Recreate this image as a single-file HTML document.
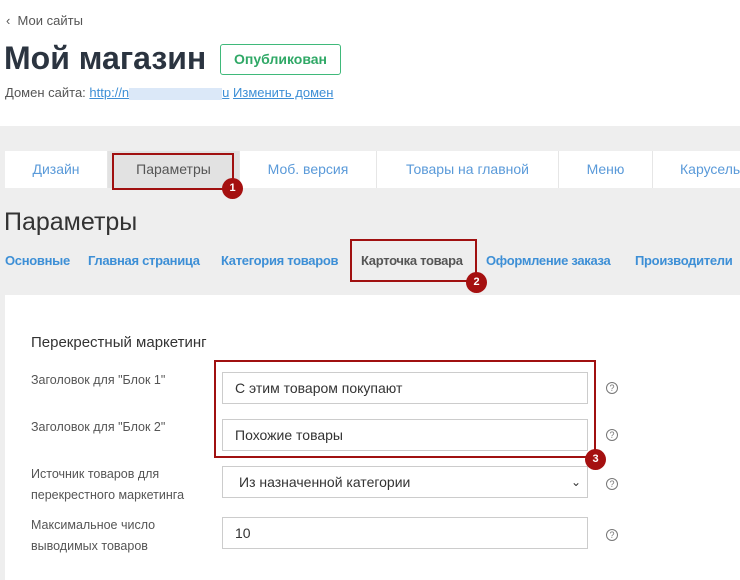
<!DOCTYPE html>
<html><head><meta charset="utf-8"><style>
*{box-sizing:border-box;margin:0;padding:0}
body{width:740px;height:580px;overflow:hidden;background:#fff;font-family:"Liberation Sans",sans-serif;position:relative;color:#333}
.a{position:absolute;white-space:nowrap}
.gray{position:absolute;left:0;top:126px;width:740px;height:454px;background:#eee}
.panel{position:absolute;left:5px;top:295px;width:735px;height:285px;background:#fff}
.tab{position:absolute;top:151px;height:37px;background:#fff;border-right:1px solid #e6e6e6;color:#5a9ad9;font-size:14px;text-align:center;line-height:37px}
.sub{position:absolute;top:253px;font-size:13px;color:#3d8fd6;font-weight:bold;letter-spacing:-.3px}
.red{position:absolute;border:2px solid #a01010}
.badge{position:absolute;width:21px;height:21px;border-radius:50%;background:#a51010;color:#fff;font-size:11px;font-weight:bold;text-align:center;line-height:21px}
.inp{position:absolute;left:222px;width:366px;height:32px;border:1px solid #ccc;font-size:14px;padding-left:12px;line-height:30px;color:#333}
.lbl{position:absolute;left:31px;font-size:12.5px;color:#555;line-height:21px}
.q{position:absolute;left:606px;width:12px;height:12px;border:1px solid #777;border-radius:50%;font-size:9px;line-height:10px;text-align:center;color:#777}
</style></head><body>
<div class="a" style="left:6px;top:13px;font-size:13px;color:#555">&#8249;&nbsp;&nbsp;Мои сайты</div>
<div class="a" style="left:4px;top:40px;font-size:32px;font-weight:bold;color:#2b3440">Мой магазин</div>
<div class="a" style="left:220px;top:44px;width:121px;height:31px;border:1px solid #3fb97a;border-radius:3px;color:#2fa866;font-size:14px;font-weight:bold;text-align:center;line-height:29px">Опубликован</div>
<div class="a" style="left:5px;top:85px;font-size:13px;color:#555">Домен сайта: <span style="color:#3d8fd6;text-decoration:underline">http://n</span><span style="display:inline-block;width:93px;height:12px;background:#dbe8f8;vertical-align:middle"></span><span style="color:#3d8fd6;text-decoration:underline">u</span> <span style="color:#3d8fd6;text-decoration:underline">Изменить домен</span></div>
<div class="gray"></div>
<div class="tab" style="left:5px;width:103px">Дизайн</div>
<div class="tab" style="left:108px;width:132px;background:#e2e2e2;color:#555">Параметры</div>
<div class="tab" style="left:240px;width:137px">Моб. версия</div>
<div class="tab" style="left:377px;width:182px">Товары на главной</div>
<div class="tab" style="left:559px;width:94px">Меню</div>
<div class="tab" style="left:653px;width:120px;border:none;text-align:left;padding-left:27px">Карусель</div>
<div class="red" style="left:112px;top:153px;width:122px;height:37px"></div>
<div class="badge" style="left:222px;top:178px">1</div>
<div class="a" style="left:4px;top:208px;font-size:25px;color:#333">Параметры</div>
<div class="sub" style="left:5px">Основные</div>
<div class="sub" style="left:88px">Главная страница</div>
<div class="sub" style="left:221px">Категория товаров</div>
<div class="sub" style="left:361px;color:#555">Карточка товара</div>
<div class="sub" style="left:486px">Оформление заказа</div>
<div class="sub" style="left:635px">Производители</div>
<div class="red" style="left:350px;top:239px;width:127px;height:43px"></div>
<div class="badge" style="left:466px;top:272px">2</div>
<div class="panel"></div>
<div class="a" style="left:31px;top:334px;font-size:15px;color:#333">Перекрестный маркетинг</div>
<div class="lbl" style="top:370px">Заголовок для "Блок 1"</div>
<div class="lbl" style="top:417px">Заголовок для "Блок 2"</div>
<div class="lbl" style="top:464px">Источник товаров для<br>перекрестного маркетинга</div>
<div class="lbl" style="top:515px">Максимальное число<br>выводимых товаров</div>
<div class="inp" style="top:372px">С этим товаром покупают</div>
<div class="inp" style="top:419px">Похожие товары</div>
<div class="inp" style="top:466px;padding-left:16px">Из назначенной категории<span style="position:absolute;right:6px;top:0;font-size:12px">&#8964;</span></div>
<div class="inp" style="top:517px">10</div>
<div class="q" style="top:382px">?</div>
<div class="q" style="top:429px">?</div>
<div class="q" style="top:478px">?</div>
<div class="q" style="top:529px">?</div>
<div class="red" style="left:214px;top:360px;width:382px;height:98px"></div>
<div class="badge" style="left:585px;top:449px">3</div>
</body></html>
